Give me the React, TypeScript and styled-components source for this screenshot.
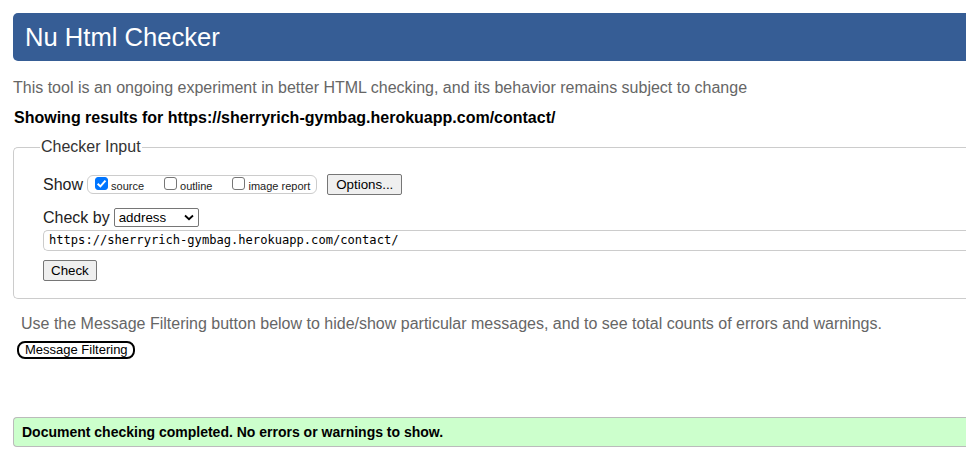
import React from "react";
import styled, { createGlobalStyle } from "styled-components";

const Global = createGlobalStyle`
  html, body { margin: 0; padding: 0; overflow: hidden; background: #fff; }
  body { font-family: "Liberation Sans", Arial, sans-serif; }
`;

const Page = styled.div`
  width: 1000px;
  padding: 13px 0 0 13px;
  box-sizing: border-box;
`;

const Header = styled.h1`
  margin: 0;
  height: 48px;
  background: #365d95;
  border-radius: 5px 0 0 5px;
  color: #fff;
  font-weight: normal;
  font-size: 25.6px;
  line-height: 48px;
  padding-left: 12px;
`;

const Intro = styled.p`
  margin: 17px 0 0 0;
  color: #666;
  font-size: 16px;
  line-height: 20px;
`;

const Results = styled.p`
  margin: 10px 0 0 1px;
  color: #000;
  font-weight: bold;
  font-size: 16px;
  line-height: 20px;
`;

const Fieldset = styled.fieldset`
  margin: 10px 0 0 0;
  padding: 10px 0 17px 29px;
  border: 1px solid #ccc;
  border-radius: 5px 0 0 5px;
  border-right: none;
`;

const Legend = styled.legend`
  color: #333;
  font-size: 16px;
  padding: 0 1px;
  margin-left: -3px;
  line-height: 18px;
`;

const Row = styled.div<{ $mt?: number }>`
  display: flex;
  align-items: center;
  margin-top: ${(p) => p.$mt ?? 0}px;
  font-size: 16px;
  color: #222;
`;

const Label = styled.span`
  font-size: 16px;
  color: #222;
  margin-right: 4px;
`;

const ShowGroup = styled.span`
  display: inline-flex;
  align-items: center;
  height: 17px;
  border: 1px solid #ccc;
  border-radius: 6px;
  padding: 0 6px 0 7px;
  margin-right: 10px;
`;

const CheckLabel = styled.label`
  display: inline-flex;
  align-items: center;
  font-size: 11px;
  color: #222;
  margin-right: 20px;
  padding-top: 3px;
  &:last-child { margin-right: 0; }
`;

const Box = styled.span<{ $checked?: boolean }>`
  width: 13px;
  height: 13px;
  border-radius: 3px;
  box-sizing: border-box;
  margin-right: 3px;
  margin-top: -5px;
  display: inline-flex;
  align-items: center;
  justify-content: center;
  background: ${(p) => (p.$checked ? "#0075ff" : "#fff")};
  border: 1px solid ${(p) => (p.$checked ? "#0075ff" : "#767676")};
`;

const Button = styled.button<{ $px?: number }>`
  font-family: "Liberation Sans", Arial, sans-serif;
  font-size: 13.33px;
  color: #000;
  background: #efefef;
  border: 1px solid #767676;
  border-radius: 2px;
  padding: 1px ${(p) => p.$px ?? 8}px;
  height: 21px;
  line-height: 17px;
`;

const Select = styled.span`
  display: inline-flex;
  align-items: center;
  justify-content: space-between;
  box-sizing: border-box;
  width: 85px;
  height: 19px;
  border: 1px solid #767676;
  border-radius: 2px;
  padding: 0 4px 0 4px;
  font-size: 13.33px;
  color: #000;
  background: #fff;
`;

const UrlInput = styled.div`
  margin-top: 3px;
  height: 21px;
  box-sizing: border-box;
  border: 1px solid #ccc;
  border-right: none;
  border-radius: 5px 0 0 5px;
  padding-left: 5px;
  font-family: "DejaVu Sans Mono", "Liberation Mono", monospace;
  font-size: 12.1px;
  line-height: 19px;
  color: #000;
`;

const Hint = styled.p`
  margin: 15px 0 0 8px;
  color: #666;
  font-size: 16px;
  line-height: 20px;
`;

const FilterButton = styled.button`
  margin: 7px 0 0 4px;
  font-family: "Liberation Sans", Arial, sans-serif;
  font-size: 13px;
  color: #000;
  background: #fff;
  border: 2px solid #000;
  border-radius: 8px;
  padding: 0 5px 0 6px;
  height: 18px;
  line-height: 14px;
`;

const Success = styled.div`
  margin-top: 58px;
  height: 30px;
  box-sizing: border-box;
  background: #ccffcc;
  border: 1px solid #bbb;
  border-right: none;
  border-radius: 4px 0 0 4px;
  padding-left: 8px;
  font-weight: bold;
  font-size: 14px;
  line-height: 28px;
  color: #000;
`;

const Check = () => (
  <svg width="11" height="11" viewBox="0 0 10 10">
    <path d="M1.5 5.2 L4 7.6 L8.6 2.4" stroke="#fff" strokeWidth="1.8" fill="none" />
  </svg>
);

const Chevron = () => (
  <svg width="10" height="7" viewBox="0 0 10 7">
    <path d="M1 1.5 L5 5.2 L9 1.5" stroke="#000" strokeWidth="1.8" fill="none" />
  </svg>
);

export default function App() {
  return (
    <>
      <Global />
      <Page>
        <Header>Nu Html Checker</Header>
        <Intro>
          This tool is an ongoing experiment in better HTML checking, and its behavior remains subject to change
        </Intro>
        <Results>Showing results for https://sherryrich-gymbag.herokuapp.com/contact/</Results>
        <Fieldset>
          <Legend>Checker Input</Legend>
          <Row $mt={8}>
            <Label>Show</Label>
            <ShowGroup>
              <CheckLabel>
                <Box $checked>
                  <Check />
                </Box>
                source
              </CheckLabel>
              <CheckLabel>
                <Box />
                outline
              </CheckLabel>
              <CheckLabel>
                <Box />
                image report
              </CheckLabel>
            </ShowGroup>
            <Button>Options...</Button>
          </Row>
          <Row $mt={13}>
            <Label>Check by</Label>
            <Select>
              address
              <Chevron />
            </Select>
          </Row>
          <UrlInput>https://sherryrich-gymbag.herokuapp.com/contact/</UrlInput>
          <Row $mt={9}>
            <Button $px={7}>Check</Button>
          </Row>
        </Fieldset>
        <Hint>
          Use the Message Filtering button below to hide/show particular messages, and to see total counts of errors and warnings.
        </Hint>
        <FilterButton>Message Filtering</FilterButton>
        <Success>Document checking completed. No errors or warnings to show.</Success>
      </Page>
    </>
  );
}
